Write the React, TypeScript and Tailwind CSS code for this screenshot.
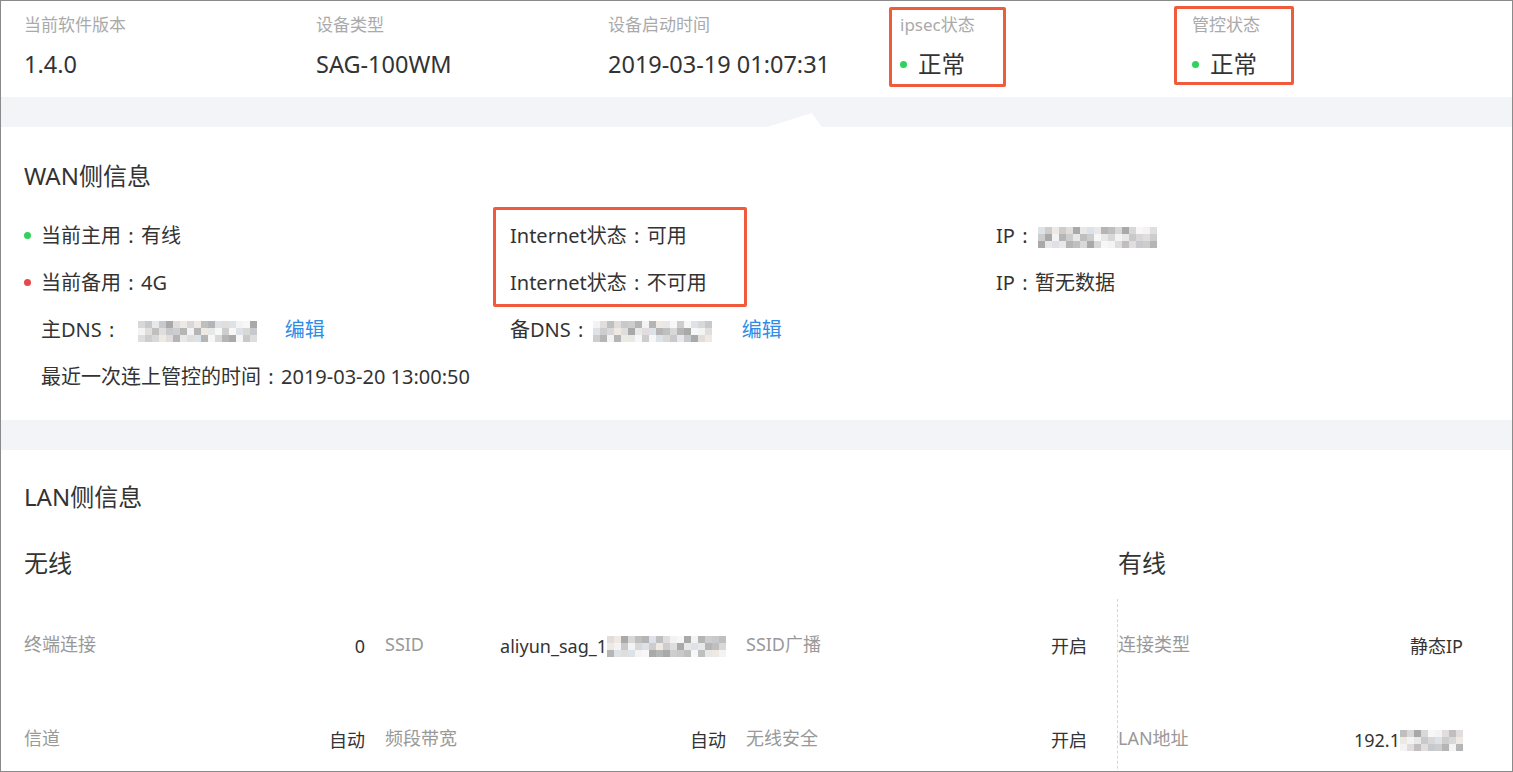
import React from 'react';

const palette = ['#d8d8d8', '#e8e8e8', '#cdcdcd', '#f3f3f3', '#bfbfbf', '#a9a9a9', '#dde2e9', '#eee9e2', '#c7c9cc', '#f7f7f7', '#b5b5b5', '#e1dddd'];

const Mosaic: React.FC<{ cols: number; seed: number }> = ({ cols, seed }) => {
  const cells = [];
  for (let r = 0; r < 3; r++) {
    for (let c = 0; c < cols; c++) {
      const n = (seed * 31 + r * 17 + c * 7 + ((c * c + r * 3 + seed) % 5)) % palette.length;
      cells.push(<span key={`${r}-${c}`} className="block w-[7px] h-[7px]" style={{ background: palette[n] }} />);
    }
  }
  return (
    <span className="inline-grid align-middle" style={{ gridTemplateColumns: `repeat(${cols}, 7px)` }}>
      {cells}
    </span>
  );
};

const Dot: React.FC<{ color: string }> = ({ color }) => (
  <span className={`inline-block w-[7px] h-[7px] rounded-full ${color}`} />
);

// centred full-width colon, as in the original page
const C: React.FC = () => <span className="inline-block w-[1em] text-center">:</span>;

const top = [
  { label: '当前软件版本', value: '1.4.0' },
  { label: '设备类型', value: 'SAG-100WM' },
  { label: '设备启动时间', value: '2019-03-19 01:07:31' },
  { label: 'ipsec状态', value: '正常', dot: true },
  { label: '管控状态', value: '正常', dot: true },
];

const App: React.FC = () => {
  return (
    <div className="w-[1513px] h-[772px] overflow-hidden border border-[#8a8a8a] bg-[#f3f4f7] text-[#333] font-['Noto_Sans','Noto_Sans_CJK_SC',sans-serif] relative">
      {/* device summary */}
      <section className="h-[96px] bg-white flex pl-[23px] pt-[12px]">
        {top.map((item, i) => (
          <div key={i} className="w-[292px]">
            <p className="text-[17px] leading-[24px] text-[#aaaaaa]">{item.label}</p>
            <div className="mt-[11px] flex items-center gap-[11px] text-[23.5px] leading-[32px] text-[#333]">
              {item.dot && <Dot color="bg-[#2fd25a]" />}
              <span>{item.value}</span>
            </div>
          </div>
        ))}
      </section>

      <div className="h-[30px] relative">
        <svg className="absolute left-[766px] top-[16px]" width="56" height="14" viewBox="0 0 56 14">
          <polygon points="0,14 45,0 55,14" fill="#ffffff" />
        </svg>
      </div>

      {/* WAN */}
      <section className="bg-white pl-[23px] pt-[33px] pb-[20px]">
        <h2 className="text-[24px] leading-[32px] text-[#333]">WAN侧信息</h2>
        <div className="mt-[20px] grid grid-cols-[486px_486px_1fr] text-[20px] text-[#333]">
          <div>
            <div className="h-[47px] flex items-center gap-[10px]"><Dot color="bg-[#2fd25a]" /><span>当前主用<C />有线</span></div>
            <div className="h-[47px] flex items-center gap-[10px]"><Dot color="bg-[#e5484d]" /><span>当前备用<C />4G</span></div>
            <div className="h-[47px] flex items-center pl-[17px]">
              <span>主DNS<C /></span>
              <span className="ml-[16px]"><Mosaic cols={17} seed={3} /></span>
              <a className="ml-[28px] text-[#2f8ce6]">编辑</a>
            </div>
            <div className="h-[47px] flex items-center pl-[17px]"><span>最近一次连上管控的时间<C />2019-03-20 13:00:50</span></div>
          </div>
          <div>
            <div className="h-[47px] flex items-center"><span>Internet状态<C />可用</span></div>
            <div className="h-[47px] flex items-center"><span>Internet状态<C />不可用</span></div>
            <div className="h-[47px] flex items-center">
              <span>备DNS<C /></span>
              <span className="ml-[2px]"><Mosaic cols={17} seed={7} /></span>
              <a className="ml-[30px] text-[#2f8ce6]">编辑</a>
            </div>
          </div>
          <div>
            <div className="h-[47px] flex items-center">
              <span>IP<C /></span>
              <span className="ml-[3px]"><Mosaic cols={17} seed={11} /></span>
            </div>
            <div className="h-[47px] flex items-center"><span>IP<C />暂无数据</span></div>
          </div>
        </div>
      </section>

      <div className="h-[30px]" />

      {/* LAN */}
      <section className="bg-white pl-[23px] pt-[31px] h-[321px]">
        <h2 className="text-[24px] leading-[32px] text-[#333]">LAN侧信息</h2>
        <div className="flex mt-[34px]">
          <div className="w-[1093px]">
            <h3 className="text-[24px] leading-[32px] text-[#333]">无线</h3>
            <div className="mt-[20px] grid grid-cols-[341px_341px_341px] gap-x-[20px] text-[18px]">
              <div className="h-[94px] flex items-center justify-between">
                <span className="text-[#999] -mt-[4px]">终端连接</span><span>0</span>
              </div>
              <div className="h-[94px] flex items-center justify-between">
                <span className="text-[#999] -mt-[4px]">SSID</span>
                <span className="flex items-center">aliyun_sag_1<Mosaic cols={17} seed={5} /></span>
              </div>
              <div className="h-[94px] flex items-center justify-between">
                <span className="text-[#999] -mt-[4px]">SSID广播</span><span>开启</span>
              </div>
              <div className="h-[94px] flex items-center justify-between">
                <span className="text-[#999] -mt-[4px]">信道</span><span>自动</span>
              </div>
              <div className="h-[94px] flex items-center justify-between">
                <span className="text-[#999] -mt-[4px]">频段带宽</span><span>自动</span>
              </div>
              <div className="h-[94px] flex items-center justify-between">
                <span className="text-[#999] -mt-[4px]">无线安全</span><span>开启</span>
              </div>
            </div>
          </div>
          <div className="w-[346px]">
            <h3 className="text-[24px] leading-[32px] text-[#333] pl-px">有线</h3>
            <div className="mt-[20px] border-l border-dashed border-[#d6d6d6] text-[18px] h-[200px]">
              <div className="h-[94px] flex items-center justify-between">
                <span className="text-[#999] -mt-[4px]">连接类型</span><span>静态IP</span>
              </div>
              <div className="h-[94px] flex items-center justify-between">
                <span className="text-[#999] -mt-[4px]">LAN地址</span>
                <span className="flex items-center">192.1<Mosaic cols={9} seed={2} /></span>
              </div>
            </div>
          </div>
        </div>
      </section>

      {/* annotation boxes */}
      <div className="absolute left-[888px] top-[6px] w-[117px] h-[80px] border-[3px] border-[#ef5b3b] rounded-[2px]" />
      <div className="absolute left-[1173px] top-[5px] w-[120px] h-[79px] border-[3px] border-[#ef5b3b] rounded-[2px]" />
      <div className="absolute left-[492px] top-[206px] w-[254px] h-[100px] border-[3px] border-[#ef5b3b] rounded-[2px]" />
    </div>
  );
};

export default App;
